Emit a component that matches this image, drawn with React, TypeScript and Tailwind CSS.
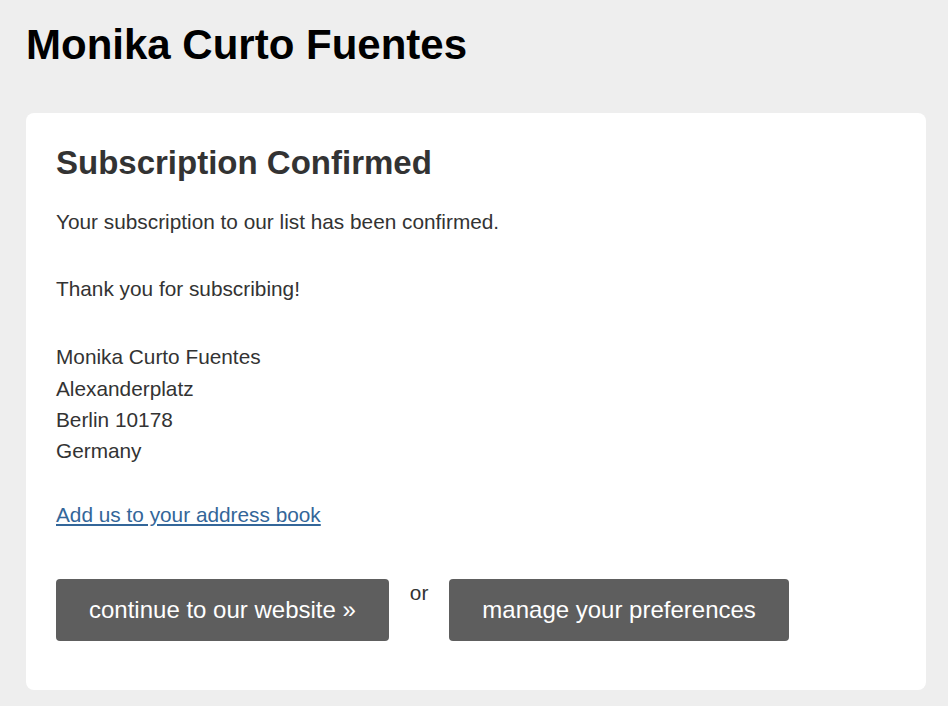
import React from "react";

export default function App() {
  return (
    <div
      className="min-h-[706px] w-full bg-[#eeeeee] pt-[21px] pb-[16px]"
      style={{ fontFamily: '"Liberation Sans", Arial, sans-serif' }}
    >
      <h1 className="ml-[26px] text-[42px] leading-[48px] font-bold text-black">
        Monika Curto Fuentes
      </h1>
      <div className="ml-[26px] mt-[44px] w-[900px] rounded-[8px] bg-white px-[30px] pt-[30px] pb-[49px] text-[#333333]">
        <h2 className="text-[33px] leading-[40px] font-bold text-[#333333]">
          Subscription Confirmed
        </h2>
        <div className="text-[20.8px] leading-[31.2px]">
          <p className="mt-[23px]">Your subscription to our list has been confirmed.</p>
          <p className="mt-[36px]">Thank you for subscribing!</p>
          <p className="mt-[37px]">
            Monika Curto Fuentes
            <br />
            Alexanderplatz
            <br />
            Berlin 10178
            <br />
            Germany
          </p>
          <p className="mt-[33px]">
            <a href="#" className="text-[#336699] underline underline-offset-2">
              Add us to your address book
            </a>
          </p>
        </div>
        <div className="mt-[49px] flex items-start">
          <a
            href="#"
            className="rounded-[4px] bg-[#5e5e5e] px-[33px] py-[17px] text-[24px] leading-[28px] text-white"
          >
            continue to our website »
          </a>
          <span className="mx-[21px] -mt-[2px] text-[20.8px] leading-[31.2px] text-[#333333]">
            or
          </span>
          <a
            href="#"
            className="rounded-[4px] bg-[#5e5e5e] px-[33px] py-[17px] text-[24px] leading-[28px] text-white"
          >
            manage your preferences
          </a>
        </div>
      </div>
    </div>
  );
}
